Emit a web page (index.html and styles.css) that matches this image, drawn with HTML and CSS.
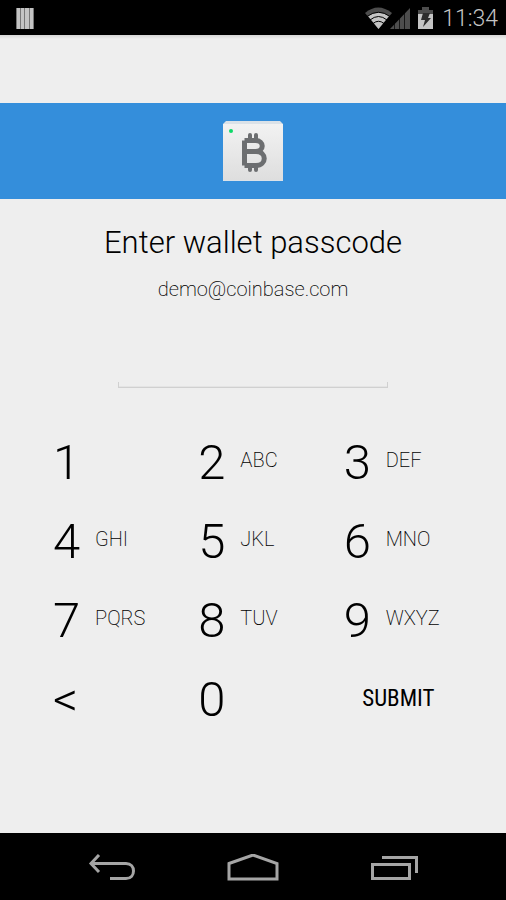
FILE: index.html
```html
<!DOCTYPE html>
<html lang="en">
<head>
<meta charset="utf-8">
<meta name="viewport" content="width=device-width, initial-scale=1">
<title>Enter wallet passcode</title>
<link rel="stylesheet" href="styles.css">
</head>
<body>
<header class="status">
  <svg class="status-app" width="18" height="22" viewBox="0 0 18 22" aria-hidden="true">
    <path fill="#777" d="M0 0h18v21H0z"/>
    <path fill="#c4c4c4" d="M1 0h3v21H1zM5 0h3v21H5zM9 0h4v21H9zM14 0h3v21h-3z"/>
  </svg>
  <div class="status-right">
    <svg width="69" height="24" viewBox="0 0 69 24" aria-hidden="true">
      <path fill="#4d4d4d" d="M0 6Q13-5 27 6L13.500 22z"/>
      <path fill="#c4c4c4" d="M3 9Q13.500 2 24 9L13.500 22z"/>
      <path fill="none" stroke="#000" stroke-width="1" d="M2 9.500Q13.500 1 25 9.500M5 13Q13.500 6 22 13M8 16.500Q13.500 12 19 16.500"/>
      <path fill="#4d4d4d" d="M25 22L45 1v21z"/>
      <path stroke="#000" d="M29.500 9v14M34.500 7v16M39.500 3v20" stroke-width=".7"/>
      <path fill="#4d4d4d" d="M57 0h7v3h4v6H53V3h4z"/>
      <path fill="#c4c4c4" d="M53 7h15v15H53z"/>
      <path fill="#2c2c2c" d="M58 6h7l-2 5h3l-8 9 2-7h-4z"/>
    </svg>
    <time class="clock">11:34</time>
  </div>
</header>

<main class="screen">
  <div class="brand">
    <svg width="60" height="60" viewBox="0 0 60 60" role="img" aria-label="Wallet">
      <defs>
        <linearGradient id="tile" x1="0" y1="0" x2="0" y2="1">
          <stop offset="0" stop-color="#f2f2f2"/><stop offset="1" stop-color="#dedede"/>
        </linearGradient>
      </defs>
      <path fill="#dbe2e8" d="M3 0h54l3 3v57H0V3z"/>
      <path fill="url(#tile)" d="M0 3h60v56H0z"/>
      <circle cx="8" cy="10" r="2" fill="#0dd968"/>
      <g fill="none" stroke="#6c6e70" stroke-width="5" stroke-linejoin="round">
        <path d="M21.500 19.500h11c9 0 9 11 0 11h-11M33 30.500c11 0 11 14 0 14H21.500M21.500 19.500v25"/>
        <path stroke-width="4" stroke-linecap="round" d="M27 14v5M33 14v5M27 45v4M33 45v4"/>
      </g>
    </svg>
  </div>
  <form class="login" onsubmit="return false">
    <h1 class="title"><label for="passcode">Enter wallet passcode</label></h1>
    <p class="email">demo@coinbase.com</p>
    <div class="field"><input class="passcode" id="passcode" type="password" inputmode="numeric"></div>
    <div class="keypad">
      <button class="key" type="button"><span class="digit">1</span></button>
      <button class="key" type="button"><span class="digit">2</span><span class="letters">ABC</span></button>
      <button class="key" type="button"><span class="digit">3</span><span class="letters">DEF</span></button>
      <button class="key" type="button"><span class="digit">4</span><span class="letters">GHI</span></button>
      <button class="key" type="button"><span class="digit">5</span><span class="letters">JKL</span></button>
      <button class="key" type="button"><span class="digit">6</span><span class="letters">MNO</span></button>
      <button class="key" type="button"><span class="digit">7</span><span class="letters">PQRS</span></button>
      <button class="key" type="button"><span class="digit">8</span><span class="letters">TUV</span></button>
      <button class="key" type="button"><span class="digit">9</span><span class="letters">WXYZ</span></button>
      <button class="key" type="button" aria-label="Delete"><span class="digit">&lt;</span></button>
      <button class="key" type="button"><span class="digit">0</span></button>
      <button class="key submit" type="submit">SUBMIT</button>
    </div>
  </form>
</main>

<nav class="navbar">
  <button class="nav" type="button" aria-label="Back">
    <svg width="48" height="28" viewBox="0 0 48 28"><path fill="none" stroke="#a5a5a5" stroke-width="3" d="M11 1L3 9.500L11 18M4 9.500H38C48 9.500 48 24.500 38 24.500H22"/></svg>
  </button>
  <button class="nav" type="button" aria-label="Home">
    <svg width="52" height="28" viewBox="0 0 52 28"><path fill="none" stroke="#a5a5a5" stroke-width="3" d="M2 9.500L26 1L50 9.500V25H2z"/></svg>
  </button>
  <button class="nav" type="button" aria-label="Recent apps">
    <svg width="48" height="28" viewBox="0 0 48 28"><path fill="none" stroke="#a5a5a5" stroke-width="3" d="M2.500 10.500h37v14h-37zM12 3.500h34.500V19"/></svg>
  </button>
</nav>
</body>
</html>
```
FILE: styles.css
```css
* {
  box-sizing: border-box;
}

body {
  margin: 0;
  min-height: 100vh;
  display: flex;
  flex-direction: column;
  background: #eee;
  color: #000;
  font-family: Roboto, "Liberation Sans", sans-serif;
  font-weight: 300;
}

button {
  padding: 0;
  border: 0;
  background: none;
  color: inherit;
  font: inherit;
  cursor: pointer;
}

svg {
  display: block;
}

.status {
  display: flex;
  align-items: center;
  justify-content: space-between;
  height: 35px;
  padding: 2px 8px 0 16px;
  background: #000;
}

.status-right {
  display: flex;
  align-items: center;
  gap: 8px;
}

.clock {
  color: #c4c4c4;
  font-size: 23px;
  line-height: 36px;
}

.screen {
  flex: 1;
  padding-top: 68px;
  background: linear-gradient(#d6d6d6, #eee 4px);
}

.brand {
  display: flex;
  justify-content: center;
  padding: 18px 0;
  background: #348edb;
}

.title {
  margin: 24px 0 0;
  font-size: 31px;
  font-weight: 300;
  line-height: 40px;
  text-align: center;
}

.email {
  margin: 14px 0 0;
  font-size: 20px;
  font-weight: 200;
  line-height: 24px;
  text-align: center;
}

.field {
  display: flex;
  justify-content: center;
  margin-top: 48px;
}

.passcode {
  width: 270px;
  height: 39px;
  padding: 0 12px;
  border: 0;
  background:
    linear-gradient(#d0d0d0, #d0d0d0) left bottom / 1px 6px no-repeat,
    linear-gradient(#d0d0d0, #d0d0d0) right bottom / 1px 6px no-repeat,
    linear-gradient(#e4e4e4 50%, #d0d0d0 50%) bottom / 100% 2px no-repeat;
  font-size: 24px;
  text-align: center;
  outline: 0;
}

.keypad {
  display: grid;
  grid-template-columns: repeat(3, 1fr);
  grid-auto-rows: 79px;
  margin: 35px 17px 0 53px;
}

.key {
  display: grid;
  grid-template-columns: 42px 1fr;
  align-items: center;
  text-align: left;
}

.digit {
  font-size: 49px;
  line-height: 56px;
}

.letters {
  padding-bottom: 5px;
  font-size: 20px;
  font-weight: 200;
  line-height: 24px;
}

.submit {
  display: block;
  padding: 0 36px 3px 0;
  font-size: 23px;
  font-family: "Roboto Condensed", Roboto, sans-serif;
  font-weight: 400;
  text-align: center;
}

.navbar {
  display: flex;
  justify-content: center;
  gap: 91px;
  height: 67px;
  background: #000;
}

.nav {
  display: flex;
  align-items: center;
  padding-top: 3px;
}
```
